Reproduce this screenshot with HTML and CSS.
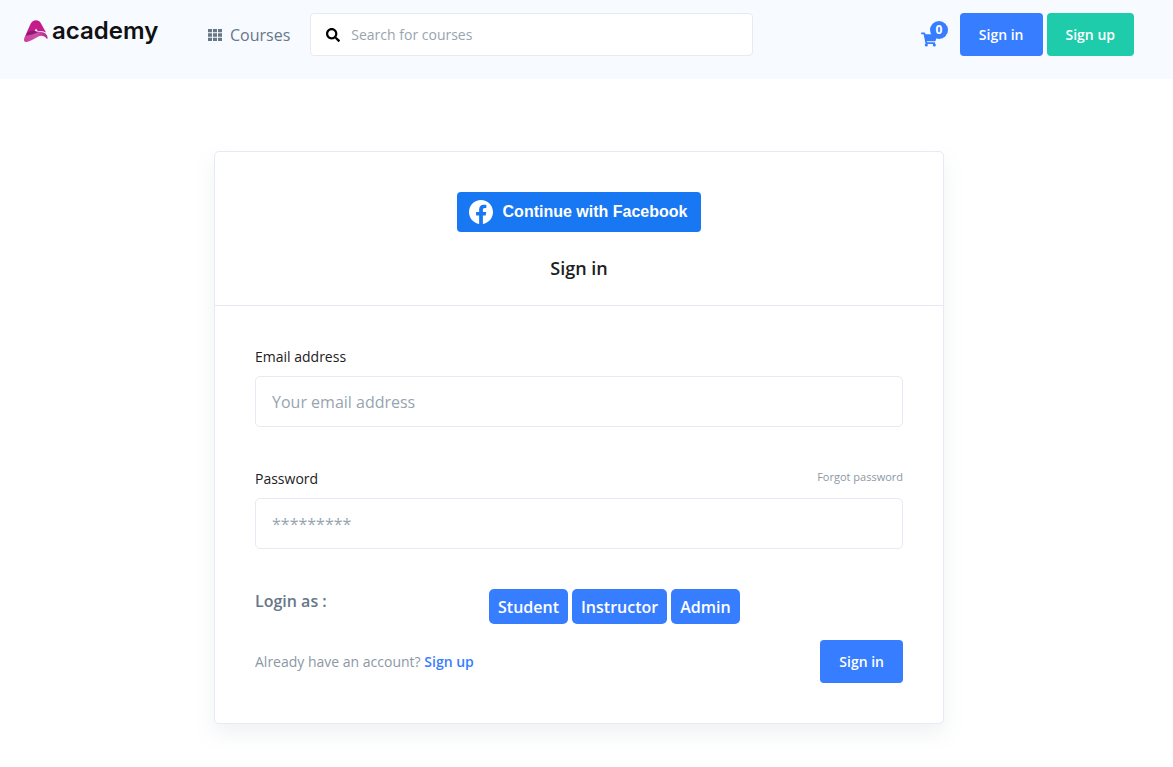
FILE: index.html
```html
<!DOCTYPE html>
<html lang="en">
<head>
<meta charset="utf-8">
<meta name="viewport" content="width=device-width, initial-scale=1">
<title>Sign in | Academy</title>
<link rel="stylesheet" href="styles.css">
</head>
<body>
<header class="topbar">
  <a class="logo" href="#" aria-label="academy">
    <svg class="logo-mark" viewBox="0 0 48 44" aria-hidden="true">
      <defs>
        <linearGradient id="arch" x1="0" y1="1" x2="1" y2="0"><stop offset="0" stop-color="#b3208a"/><stop offset=".5" stop-color="#c91b8c"/><stop offset="1" stop-color="#b81c85"/></linearGradient>
        <linearGradient id="swoosh" x1="0" y1="0" x2="1" y2="0"><stop offset="0" stop-color="#cb3f9f"/><stop offset=".55" stop-color="#d04ea8"/><stop offset="1" stop-color="#b02788"/></linearGradient>
      </defs>
      <path fill="url(#arch)" d="M1 35 13 8C17-2 30-2 34 7L44 25C39 22 34 22 28 23L24 17 18 28C10 29 5 31 1 35Z"/>
      <path fill="#8c1a73" d="M7 25C14 20 23 21 30 25L20 30 4 33Z"/>
      <path fill="url(#swoosh)" d="M1 35C6 28 14 31 22 27C31 22 42 23 46 31C48 36 47 38 46 38C41 31 33 30 27 34C20 38 12 43 5 44C0 44-1 40 1 35Z"/>
    </svg>
    <span class="logo-text">academy</span>
  </a>
  <a class="courses" href="#">
    <svg class="grid-icon" viewBox="0 0 14 12" aria-hidden="true"><path fill="currentColor" d="M0 0h4v3.300H0zM5 0h4v3.300H5zM10 0h4v3.300h-4zM0 4.300h4v3.400H0zM5 4.300h4v3.400H5zM10 4.300h4v3.400h-4zM0 8.700h4V12H0zM5 8.700h4V12H5zM10 8.700h4V12h-4z"/></svg>
    Courses
  </a>
  <form class="search" role="search">
    <button class="search-button" type="button" aria-label="Search">
      <svg class="search-icon" viewBox="0 0 512 512" aria-hidden="true"><path fill="currentColor" d="M505 442.700 405.300 343c-4.500-4.500-10.600-7-17-7H372c27.600-35.300 44-79.700 44-128C416 93.100 322.900 0 208 0S0 93.100 0 208s93.100 208 208 208c48.300 0 92.700-16.400 128-44v16.300c0 6.400 2.500 12.500 7 17l99.700 99.700c9.400 9.400 24.600 9.400 33.900 0l28.300-28.300c9.400-9.400 9.400-24.600.1-34zM208 336c-70.700 0-128-57.200-128-128 0-70.700 57.200-128 128-128 70.700 0 128 57.200 128 128 0 70.700-57.200 128-128 128z"/></svg>
    </button>
    <input class="search-input" type="search" placeholder="Search for courses" aria-label="Search for courses">
  </form>
  <nav class="actions">
    <a class="cart" href="#" aria-label="Shopping cart, 0 items">
      <svg class="cart-icon" viewBox="0 0 576 512" aria-hidden="true"><path fill="currentColor" d="M528.100 301.300l47.300-208C578.800 78.300 567.400 64 552 64H159.200l-9.200-44.800C147.800 8 137.900 0 126.500 0H24C10.700 0 0 10.700 0 24v16c0 13.300 10.700 24 24 24h69.900l70.200 343.400C147.300 417.100 136 435.200 136 456c0 30.900 25.100 56 56 56s56-25.100 56-56c0-15.700-6.400-29.800-16.800-40h209.600C430.400 426.200 424 440.300 424 456c0 30.900 25.100 56 56 56s56-25.100 56-56c0-22.200-12.900-41.300-31.600-50.400l5.500-24.300c3.400-15-8-29.300-23.400-29.300H218.100l-6.500-32h293.100c11.200 0 20.900-7.800 23.400-18.700z"/></svg>
      <span class="cart-count">0</span>
    </a>
    <a class="button" href="#">Sign in</a>
    <a class="button button-green" href="#">Sign up</a>
  </nav>
</header>
<main class="page">
  <section class="card">
    <div class="card-header">
      <button class="facebook" type="button">
        <svg class="facebook-icon" viewBox="0 0 24 24" aria-hidden="true"><path fill="#fff" d="M24 12.070C24 5.400 18.630 0 12 0S0 5.400 0 12.070C0 18.100 4.390 23.090 10.130 24v-8.440H7.080v-3.490h3.050V9.410c0-3.020 1.790-4.690 4.530-4.690 1.310 0 2.680.240 2.680.240v2.970h-1.510c-1.490 0-1.950.930-1.950 1.880v2.260h3.320l-.530 3.490h-2.790V24C19.610 23.090 24 18.100 24 12.070z"/></svg>
        Continue with Facebook
      </button>
      <h1 class="title">Sign in</h1>
    </div>
    <form class="card-body">
      <div class="fields">
        <div class="field">
          <label class="label" for="email">Email address</label>
          <input class="input" id="email" type="email" placeholder="Your email address">
        </div>
        <div class="field">
          <div class="label-row">
            <label class="label" for="password">Password</label>
            <a class="forgot" href="#">Forgot password</a>
          </div>
          <input class="input" id="password" type="password" placeholder="*********">
        </div>
      </div>
      <div class="roles">
        <span class="roles-label">Login as :</span>
        <div class="roles-buttons">
          <button class="role" type="button">Student</button>
          <button class="role" type="button">Instructor</button>
          <button class="role" type="button">Admin</button>
        </div>
      </div>
      <div class="footer">
        <p class="account">Already have an account? <a class="signup" href="#">Sign up</a></p>
        <button class="button" type="submit">Sign in</button>
      </div>
    </form>
  </section>
</main>
</body>
</html>
```
FILE: styles.css
```css
* { box-sizing: border-box; }
body {
  margin: 0;
  background: #fff;
  color: #1e2022;
  font-family: "Open Sans", sans-serif;
  font-size: 16px;
  line-height: 24px;
}
a { text-decoration: none; }
button, input { font-family: inherit; }
.topbar {
  display: flex;
  align-items: flex-start;
  padding: 13px 39px 23px 24px;
  background: #f7faff;
}
.logo {
  display: flex;
  align-items: center;
  gap: 4px;
  width: 184px;
  height: 35px;
  color: #111;
}
.logo-mark { width: 24px; height: 22px; }
.logo-text { font: 600 24px/32px Inter, sans-serif; }
.courses {
  display: flex;
  align-items: center;
  gap: 8px;
  height: 43px;
  margin-right: 20px;
  color: #677788;
}
.grid-icon { width: 14px; height: 12px; }
.search {
  display: flex;
  flex: 0 1 443px;
  min-width: 0;
  height: 43px;
  border: 1px solid #e7eaf3;
  border-radius: 4px;
  background: #fff;
}
.search-button {
  display: flex;
  align-items: center;
  padding: 0 11px 0 15px;
  border: 0;
  background: none;
  color: #000;
}
.search-icon { width: 14px; height: 14px; }
.search-input {
  flex: 1;
  min-width: 0;
  padding: 0;
  border: 0;
  background: none;
  font-size: 14px;
}
.search-input::placeholder, .input::placeholder { color: #97a4af; opacity: 1; }
.actions {
  display: flex;
  align-items: flex-start;
  gap: 4px;
  margin-left: auto;
}
.cart {
  position: relative;
  width: 27px;
  height: 43px;
  margin-right: 8px;
  padding-top: 19px;
  color: #377dff;
}
.cart-icon { display: block; width: 16px; height: 15px; }
.cart-count {
  position: absolute;
  top: 8px;
  right: 0;
  width: 18px;
  height: 18px;
  border-radius: 50%;
  background: #377dff;
  color: #fff;
  font-size: 12px;
  font-weight: 700;
  line-height: 18px;
  text-align: center;
}
.button {
  padding: 11px 19px;
  border: 0;
  border-radius: 4px;
  background: #377dff;
  color: #fff;
  font-size: 14px;
  font-weight: 600;
  line-height: 21px;
}
.button-green { background: #1ecbab; }
.page { padding: 72px 15px 40px 0; }
.card {
  width: 100%;
  max-width: 730px;
  margin: 0 auto;
  border: 1px solid #e7eaf3;
  border-radius: 5px;
  background: #fff;
  box-shadow: 0 10px 20px rgba(140, 152, 164, 0.13);
}
.card-header {
  display: flex;
  flex-direction: column;
  align-items: center;
  gap: 24px;
  padding: 40px 40px 24px;
  border-bottom: 1px solid #e7eaf3;
}
.facebook {
  display: flex;
  align-items: center;
  gap: 10px;
  height: 40px;
  padding: 0 14px 0 12px;
  border: 0;
  border-radius: 4px;
  background: #1877f2;
  color: #fff;
  font: 700 16px/24px "Liberation Sans", sans-serif;
}
.facebook-icon { width: 24px; height: 24px; }
.title { margin: 0; font-size: 18px; font-weight: 600; line-height: 25px; }
.card-body { padding: 40px; }
.fields { display: grid; gap: 41px; margin-bottom: 40px; }
.label { display: block; margin-bottom: 9px; font-size: 14px; line-height: 21px; }
.label-row { display: flex; justify-content: space-between; }
.forgot { color: #8c98a4; font-size: 11px; line-height: 18px; }
.input {
  display: block;
  width: 100%;
  height: 51px;
  padding: 0 16px;
  border: 1px solid #e7eaf3;
  border-radius: 5px;
  background: #fff;
  font-size: 16px;
}
.roles {
  display: grid;
  grid-template-columns: 234px 1fr;
  margin-bottom: 16px;
}
.roles-label { color: #677788; font-weight: 600; }
.roles-buttons { display: flex; gap: 4px; }
.role {
  height: 35px;
  padding: 0 9px;
  border: 0;
  border-radius: 5px;
  background: #377dff;
  color: #fff;
  font-size: 16px;
  font-weight: 600;
}
.footer { display: flex; align-items: center; justify-content: space-between; }
.account { margin: 0; color: #8c98a4; font-size: 14px; }
.signup { color: #377dff; font-weight: 600; }
```
